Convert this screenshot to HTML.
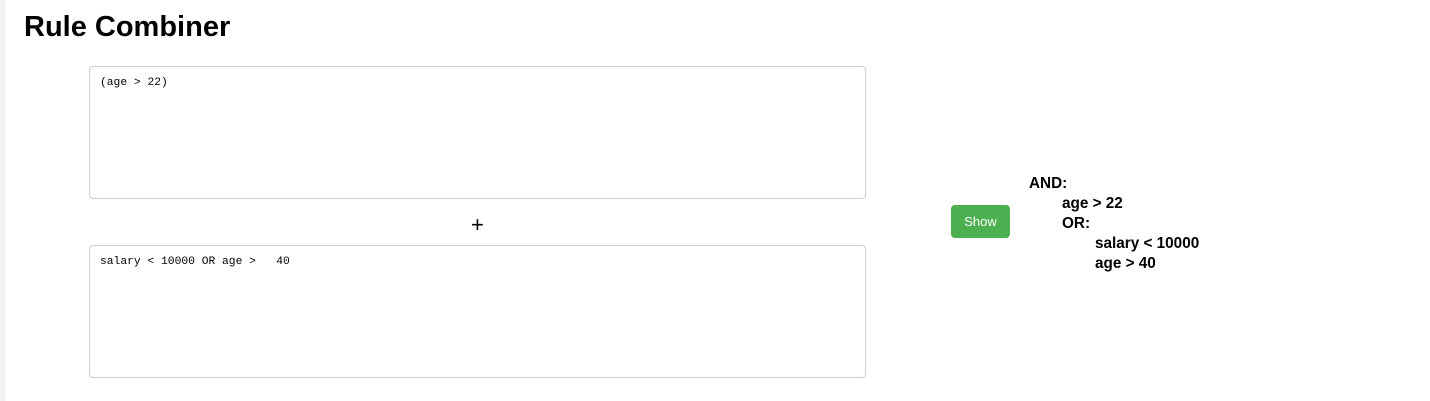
<!DOCTYPE html>
<html><head><style>
body{margin:0;background:#fff;font-family:"Liberation Sans",sans-serif;width:1430px;height:401px;overflow:hidden;position:relative}
.bar{position:absolute;left:0;top:0;width:5px;height:401px;background:#f1f1f1}
h1{position:absolute;left:24px;top:11px;margin:0;font-size:29px;font-weight:bold;color:#000}
.ta{position:absolute;left:89px;width:777px;height:133px;border:1px solid #ccc;border-radius:4px;box-sizing:border-box;padding:10px 10px;font-family:"Liberation Mono",monospace;font-size:11.3px;white-space:pre;color:#000}
.plus{position:absolute;left:471px;top:212px;font-size:22px}
.btn{position:absolute;left:951px;top:205px;width:59px;height:33px;background:#4caf50;border-radius:4px;color:#fff;font-size:13px;text-align:center;line-height:33px}
.out{position:absolute;left:1029px;top:174px;font-weight:bold;font-size:15.3px;line-height:20px}
.out div{white-space:nowrap}
</style></head><body>
<div class="bar"></div>
<h1>Rule Combiner</h1>
<div class="ta" style="top:66px">(age &gt; 22)</div>
<div class="plus">+</div>
<div class="ta" style="top:245px">salary &lt; 10000 OR age &gt;   40</div>
<div class="btn">Show</div>
<div class="out">
<div>AND:</div>
<div style="padding-left:33px">age &gt; 22</div>
<div style="padding-left:33px">OR:</div>
<div style="padding-left:66px">salary &lt; 10000</div>
<div style="padding-left:66px">age &gt; 40</div>
</div>
</body></html>
